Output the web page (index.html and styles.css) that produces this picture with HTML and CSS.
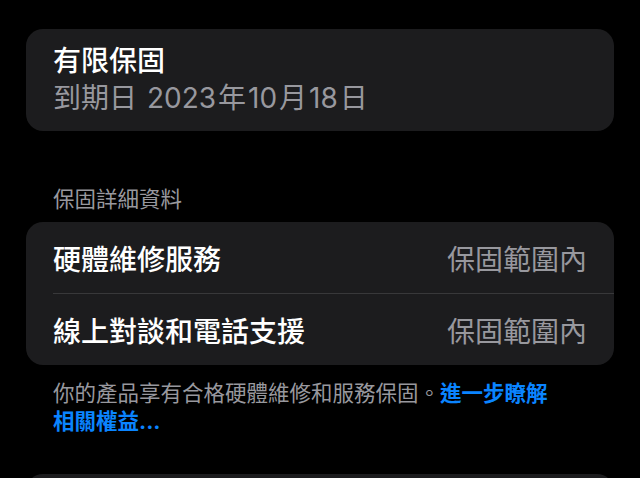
FILE: index.html
```html
<!DOCTYPE html>
<html lang="zh-Hant">
<head>
  <meta charset="UTF-8" />
  <meta name="viewport" content="width=device-width, initial-scale=1.0" />
  <title>保固</title>
  <link rel="stylesheet" href="styles.css">
</head>
<body>
  <div class="page">
    <div class="card summary">
      <div class="title">有限保固</div>
      <div class="subtitle">到期日 <span class="num">2023</span>年<span class="num">10</span>月<span class="num">18</span>日</div>
    </div>

    <div class="section">
      <div class="section-header">保固詳細資料</div>
      <div class="card list">
        <div class="row">
          <span class="label">硬體維修服務</span>
          <span class="value">保固範圍內</span>
        </div>
        <div class="row">
          <span class="label">線上對談和電話支援</span>
          <span class="value">保固範圍內</span>
        </div>
      </div>
      <p class="footer">你的產品享有合格硬體維修和服務保固。<a href="#">進一步瞭解相關權益...</a></p>
    </div>

    <div class="card next"></div>
  </div>
</body>
</html>
```

FILE: styles.css
```css
* {
  margin: 0;
  padding: 0;
  box-sizing: border-box;
  font-family: Inter, "Noto Sans CJK TC", sans-serif;
}

body {
  background: #000;
  color: #fff;
  overflow: hidden;
}

.page {
  padding: 29px 26px 0;
}

.card {
  background: #1c1c1e;
  border-radius: 17px;
}

.summary {
  height: 102px;
  padding: 14px 27px;
  font-size: 28px;
  line-height: 37px;
}

.title {
  font-weight: 500;
}

.subtitle {
  color: #98989e;
}

.num {
  margin: 0 2px;
}

.section {
  margin-top: 54px;
}

.section-header {
  padding: 0 27px;
  font-size: 21.5px;
  line-height: 28px;
  color: #98989e;
  margin-bottom: 9px;
}

.list {
  padding-left: 27px;
}

.row {
  display: flex;
  justify-content: space-between;
  align-items: center;
  height: 71px;
  padding-right: 27px;
  font-size: 28px;
}

.row + .row {
  border-top: 1px solid #38383a;
  height: 72px;
}

.label {
  font-weight: 500;
}

.value {
  color: #98989e;
}

.footer {
  max-width: 559px;
  padding: 0 27px;
  margin-top: 14px;
  font-size: 21.5px;
  line-height: 28px;
  color: #98989e;
}

.footer a {
  color: #0a84ff;
  font-weight: 700;
  text-decoration: none;
}

.next {
  margin-top: 39px;
  height: 80px;
}
```
